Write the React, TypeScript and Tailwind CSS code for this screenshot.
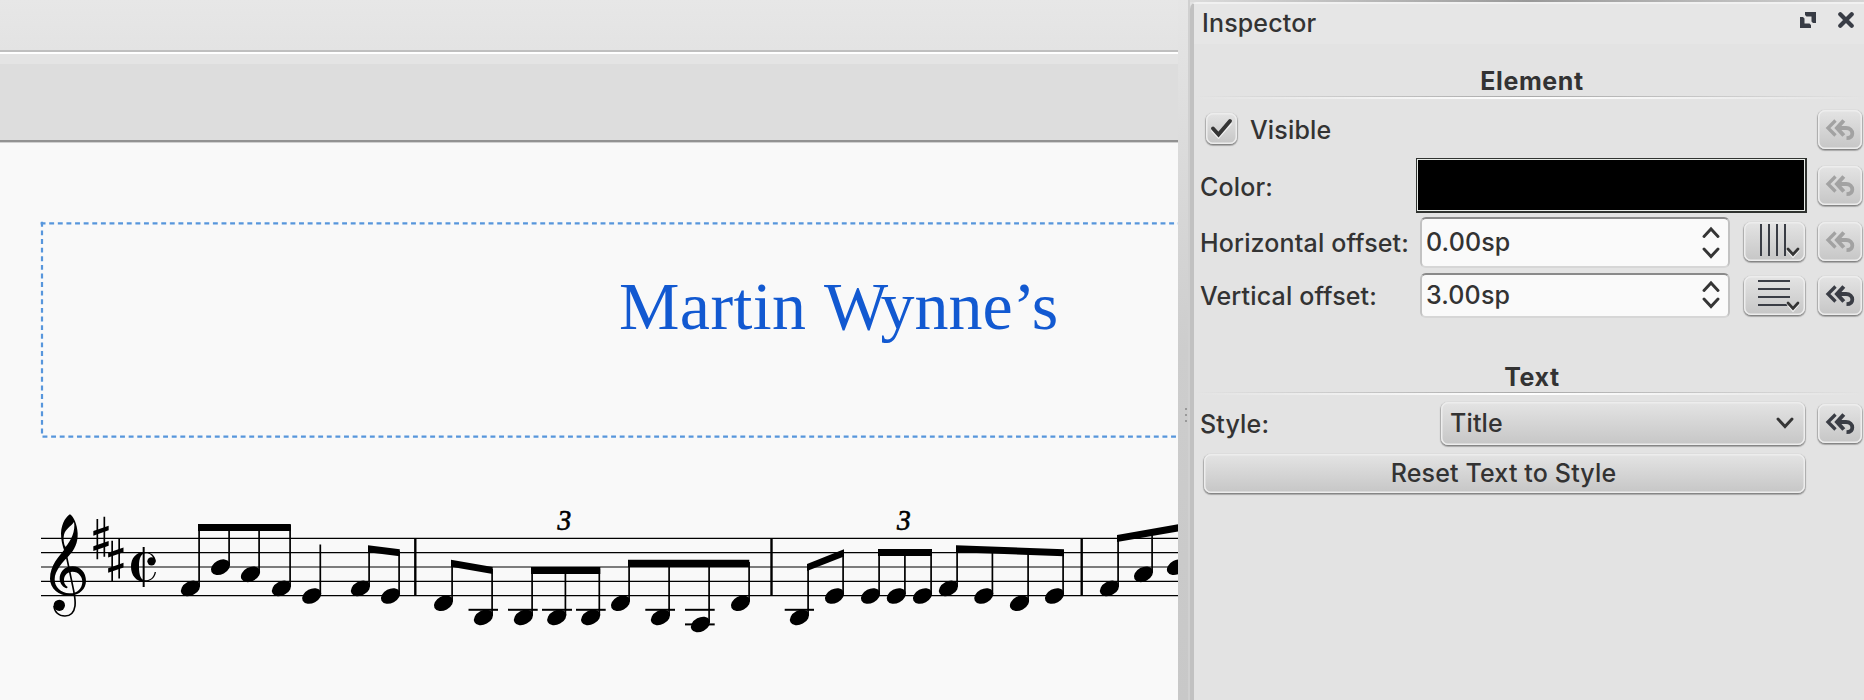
import React from "react";

/* ---------- score data (page coordinates) ---------- */

const STAFF = [538.4, 552.6, 567, 581.3, 595.7];
const BARLINES = [415.3, 771.5, 1081.7];

type Note = [x: number, y: number, stemTop: number];

const NOTES: Note[] = [
  [190.5, 588.4, 525], [220.5, 567.2, 525], [250.5, 574.3, 525], [281.5, 588.4, 525],
  [311.7, 596, 544.5], [360.5, 588.4, 547], [390.5, 596, 551],
  [443.5, 603.2, 562], [483.5, 617.4, 569], [523.5, 617.4, 569], [556.8, 617.4, 569],
  [590.7, 617.4, 569], [620.5, 603.2, 562], [660.5, 617.4, 562], [700.5, 624.5, 562],
  [740.5, 603.2, 562],
  [799.5, 617.4, 566], [834.5, 596, 551], [870.5, 596, 551], [896.3, 596, 551],
  [922.5, 596, 551], [948.5, 588.4, 547], [983.8, 596, 549], [1019.5, 603.2, 550],
  [1054.5, 596, 552], [1109.5, 588.4, 537], [1143.5, 574.3, 532], [1176.5, 567.2, 530],
];

const BEAMS: [number, number, number, number][] = [
  [198, 524, 290.8, 524], [368, 545.2, 399.8, 549.2],
  [451, 559.7, 492.7, 567], [531, 567, 600.3, 567], [628, 559.8, 749.3, 559.8],
  [807, 564, 844, 549.3], [878, 549, 932, 549], [956, 545.2, 1064, 549.2],
  [1117, 535, 1180, 524],
];

const LEDGERS: [number, number, number][] = [
  [468.5, 498, 609.8], [508, 537.7, 609.8], [542, 572, 609.8], [576, 605.7, 609.8],
  [645.3, 675, 609.8], [685, 714.7, 609.8], [685, 714.7, 624.4], [784.7, 814, 609.8],
];

function Sharp() {
  return (
    <g>
      <path d="M202 57V178M223 50V170" stroke="#000" strokeWidth="5" />
      <path d="M190 93L236 77V91L190 107ZM190 139L236 123V137L190 153Z" />
    </g>
  );
}

function Clef() {
  return (
    <g>
      <path
        fillRule="evenodd"
        d="M120 43C112 46 94 68 93 100C93 120 97 136 102 150C88 168 60 196 60 236C60 266 88 288 120 287C149 286 168 266 168 243C168 218 151 199 128 199C102 199 88 218 89 238C90 252 100 264 111 265L113 261C105 257 101 248 102 238C103 224 114 215 127 215C146 215 157 230 157 245C157 265 141 281 118 280C92 279 74 262 74 238C74 212 99 185 116 168C134 150 144 128 143 100C142 74 130 48 120 43ZM132 66C137 92 124 120 106 142C101 128 99 118 102 104C106 87 122 80 132 66Z"
      />
      <path d="M103 138L131 272C134 288 137 304 135 318C132 338 121 348 105 348C86 348 73 336 72 318" fill="none" stroke="#000" strokeWidth="5" />
      <circle cx="88" cy="316" r="17" />
    </g>
  );
}

function CutTime() {
  return (
    <g>
      <path d="M378 216C375 236 360 245 342 245C318 245 303 225 303 200C303 175 318 156 343 156C363 156 377 167 377 184H372C370 168 360 160 348 160C334 160 327 172 327 200C327 228 334 241 346 241C361 241 371 232 374 216Z" />
      <circle cx="364.500" cy="184" r="12.500" />
      <path d="M341 141V261" stroke="#000" strokeWidth="6" />
    </g>
  );
}

function Staff() {
  return (
    <svg className="block h-[262px] w-[1178px]" viewBox="0 438 1178 262">
      {STAFF.map((y) => (
        <path key={y} d={`M41 ${y}H1178`} stroke="#000" strokeWidth="1.2" />
      ))}
      {BARLINES.map((x) => (
        <path key={x} d={`M${x} 538V596`} stroke="#000" strokeWidth="2.4" />
      ))}
      <g transform="translate(30 500) scale(.33333)">
        <Clef />
        <Sharp />
        <g transform="translate(44.500 65.500)">
          <Sharp />
        </g>
        <CutTime />
      </g>
      {NOTES.map(([x, y, top]) => (
        <g key={x}>
          <ellipse cx={x} cy={y} rx="10.2" ry="7" transform={`rotate(-28 ${x} ${y})`} />
          <path d={`M${x + 8.6} ${y - 2}V${top}`} stroke="#000" strokeWidth="1.7" />
        </g>
      ))}
      {BEAMS.map(([x1, y1, x2, y2]) => (
        <path key={x1} d={`M${x1} ${y1}L${x2} ${y2}V${y2 + 7.1}L${x1} ${y1 + 7.1}Z`} />
      ))}
      {LEDGERS.map(([x1, x2, y], i) => (
        <path key={i} d={`M${x1} ${y}H${x2}`} stroke="#000" strokeWidth="2" />
      ))}
      <g className="font-['Liberation_Serif',serif] text-[29.5px] italic" stroke="#000" strokeWidth=".7">
        <text transform="translate(557.500 530) scale(.93 1)">3</text>
        <text transform="translate(897 530) scale(.93 1)">3</text>
      </g>
    </svg>
  );
}

function TitleFrame() {
  return (
    <div className="relative h-[296px] pt-[117px] pl-[619px]">
      <svg className="absolute inset-0 h-[296px] w-[1178px]" viewBox="0 142 1178 296" fill="none" stroke="#5796dc" strokeWidth="2.200" strokeDasharray="4.900 3.715">
        <path d="M40.600 223.300H1178" />
        <path d="M42 221.800V436.700" />
        <path d="M42.500 436.700H1178" />
      </svg>
      <h1 className="font-['Liberation_Serif',serif] text-[68px] leading-[94px] tracking-[0.4px] whitespace-nowrap text-[#1259d1]">
        Martin <span className="tracking-[-7.5px]">W</span>
        <span className="tracking-normal">ynne’s</span>
      </h1>
    </div>
  );
}

/* ---------- inspector widgets ---------- */

const RAISED =
  "rounded-[7px] bg-linear-to-b from-[#e4e4e4] to-[#c6c6c6] shadow-[inset_0_0_0_1.5px_#ededed,0_1px_0_0_#858585,0_1px_1px_1px_#a9a9a9]";

function Chevron({ up = false, className = "" }: { up?: boolean; className?: string }) {
  return (
    <svg className={className} viewBox="0 0 18 13" fill="none" strokeLinecap="round" strokeLinejoin="miter">
      <path d={up ? "M2 10.500L9 3L16 10.500" : "M2 2L9 9.500L16 2"} stroke="#353535" strokeWidth="2.900" />
    </svg>
  );
}

function UndoButton({ active = false }: { active?: boolean }) {
  return (
    <button className={`mr-[2px] mb-[2px] ml-auto flex h-[39px] w-[44px] shrink-0 items-start justify-center pt-[9px] ${RAISED}`}>
      <svg className="h-[22px] w-[30px]" viewBox="0 0 30 22" fill="none" stroke={active ? "#3a3d45" : "#a2a2a2"}>
        <path d="M10.500 1.500L3 9L10.500 16.500" strokeWidth="3.300" />
        <path d="M18.800 1.500L12 9L18.800 16.500" strokeWidth="4" />
        <path d="M12 9H21C25 9 27.300 11.500 27.300 14.500C27.300 17.500 25 19.200 21.500 19.200" strokeWidth="3.800" />
      </svg>
    </button>
  );
}

function Rule() {
  return (
    <div className="flex h-[3px] flex-col">
      <div className="h-px bg-linear-to-r from-transparent via-[#a9a9a9] to-transparent" />
      <div className="h-[2px] bg-linear-to-r from-transparent via-white to-transparent" />
    </div>
  );
}

function SpinBox({ value, tall = false }: { value: string; tall?: boolean }) {
  return (
    <div
      className={`flex w-[310px] shrink-0 items-center justify-between rounded-[6px] border-2 border-t-[#8a8a8a] border-r-[#c2c2c2] border-b-[#d6d6d6] border-l-[#c2c2c2] bg-[#fafafa] pr-[8px] pl-[4px] ${tall ? "h-[51px]" : "mb-[2px] h-[45px]"}`}
    >
      <span>{value}</span>
      <div className={`flex flex-col items-center ${tall ? "gap-[8px] pt-[2px]" : "gap-[4px]"}`}>
        <Chevron up className="h-[13px] w-[18px]" />
        <Chevron className="h-[13px] w-[18px]" />
      </div>
    </div>
  );
}

function GridButton({ vertical = false }: { vertical?: boolean }) {
  return (
    <button className={`mb-[2px] ml-[14px] h-[39px] w-[61px] shrink-0 ${RAISED}`}>
      <svg className="h-[39px] w-[61px]" viewBox="0 0 61 39" fill="none">
        <path
          d={vertical ? "M17 2V34M25 2V34M33 2V34M41 2V34" : "M14 5H46M14 13H46M14 21H46M14 29H46"}
          stroke="#3a3d45"
          strokeWidth="2"
        />
        <path d="M44 28L49 34L54 28" stroke="#f4f4f4" strokeWidth="3" strokeLinecap="round" />
        <path d="M44 27L49 32.500L54 27" stroke="#353535" strokeWidth="2.700" strokeLinecap="round" />
      </svg>
    </button>
  );
}

function Heading({ children, className }: { children: React.ReactNode; className: string }) {
  return <h2 className={`flex items-end justify-center pl-[6px] font-bold tracking-[0.6px] ${className}`}>{children}</h2>;
}

function Inspector() {
  return (
    <section className="flex w-[674px] flex-col">
      <div className="h-[2px] bg-linear-to-r from-[#dcdcdc] via-[#999999] to-[#d5d5d5]" />
      <div className="h-[698px] rounded-tl-[7px] border-t-2 border-l-4 border-t-[#f1f1f1] border-l-[#c1c1c1] bg-[#e3e3e3] font-['Inter',sans-serif] text-[25px] leading-[30px] font-medium tracking-[0.15px] text-[#333333]">
        <header className="flex h-[40px] items-center bg-[#e6e6e6] pr-[10px] pb-[2px] pl-[8px]">
          <span>Inspector</span>
          <svg className="mb-[6px] ml-auto size-[16px]" viewBox="0 0 16 16" fill="#383c45">
            <path d="M5 0H16V11H13L11.500 9.500V4.500H6.500L5 3Z" />
            <path d="M0 5H3L4.500 6.500V11.500H9.500L11 13V16H0Z" />
          </svg>
          <svg className="mb-[6px] ml-[22px] size-[16px]" viewBox="0 0 16 16" fill="none" stroke="#383c45" strokeWidth="4.200" strokeLinecap="round">
            <path d="M2.300 2.300L13.700 13.700M13.700 2.300L2.300 13.700" />
          </svg>
        </header>

        <Heading className="h-[52px]">Element</Heading>
        <Rule />

        <div className="mt-[4px] flex h-[54px] items-center pl-[12px]">
          <span className={`mb-[4px] flex size-[31px] items-center justify-center ${RAISED}`}>
            <svg className="h-[22px] w-[25px]" viewBox="0 0 25 22" fill="none" strokeLinecap="round">
              <path d="M4 13.500L9.500 19.500L21 6.500" stroke="#f2f2f2" strokeWidth="3.500" />
              <path d="M4 11.500L9.500 17.500L21 4" stroke="#353535" strokeWidth="3.900" />
            </svg>
          </span>
          <span className="ml-[13px]">Visible</span>
          <UndoButton />
        </div>

        <div className="flex h-[58px] items-center pl-[6px]">
          <span className="w-[216px] pt-px">Color:</span>
          <div className="mb-[2px] h-[55px] w-[391px] border-t border-r-2 border-b-2 border-l border-[#303330] bg-[#e8ece8] p-px">
            <div className="h-full bg-black" />
          </div>
          <UndoButton />
        </div>

        <div className="flex h-[54px] items-center pl-[6px]">
          <span className="w-[220px] shrink-0 pt-px whitespace-nowrap">Horizontal offset:</span>
          <SpinBox value="0.00sp" tall />
          <GridButton vertical />
          <UndoButton />
        </div>

        <div className="flex h-[54px] items-center pl-[6px]">
          <span className="w-[220px] shrink-0 whitespace-nowrap">Vertical offset:</span>
          <SpinBox value="3.00sp" />
          <GridButton />
          <UndoButton active />
        </div>

        <Heading className="h-[69px]">Text</Heading>
        <Rule />

        <div className="mt-px flex h-[56px] items-center pl-[6px]">
          <span className="w-[241px]">Style:</span>
          <button className={`mb-[2px] flex h-[43px] w-[364px] items-center justify-between pr-[11px] pl-[9px] ${RAISED}`}>
            <span>Title</span>
            <Chevron className="h-[13px] w-[18px]" />
          </button>
          <UndoButton active />
        </div>

        <div className="flex h-[43px] items-center pl-[10px]">
          <button className={`mb-px h-[39px] w-[601px] pr-[2px] pb-px ${RAISED}`}>Reset Text to Style</button>
        </div>
      </div>
    </section>
  );
}

export default function App() {
  return (
    <div className="flex h-[700px] w-[1864px] overflow-hidden bg-[#e3e3e3]">
      <main className="flex w-[1178px] shrink-0 flex-col bg-[#f9f9f9]">
        <div className="h-[50px] bg-linear-to-b from-[#e7e7e7] to-[#e3e3e3]" />
        <div className="h-[2px] bg-[#bfbfbf]" />
        <div className="h-[2px] bg-white" />
        <div className="h-[10px] bg-[#e4e4e4]" />
        <div className="h-[76px] bg-[#dddddd]" />
        <div className="h-[2px] bg-[#929292]" />
        <div className="h-[558px] overflow-hidden">
          <div className="-mb-px h-px bg-[#d0d0d0]" />
          <TitleFrame />
          <Staff />
        </div>
      </main>
      <div className="flex w-[12px] shrink-0 flex-col items-end justify-center gap-[4px] border-r-2 border-[#d0d0d0] bg-linear-to-b from-[#e6e6e6] via-[#cdcdcd] to-[#c8c8c8] pt-[130px] pr-[1px]">
        <i className="size-[2px] bg-[#999999]" />
        <i className="size-[2px] bg-[#999999]" />
        <i className="size-[2px] bg-[#999999]" />
      </div>
      <Inspector />
    </div>
  );
}
